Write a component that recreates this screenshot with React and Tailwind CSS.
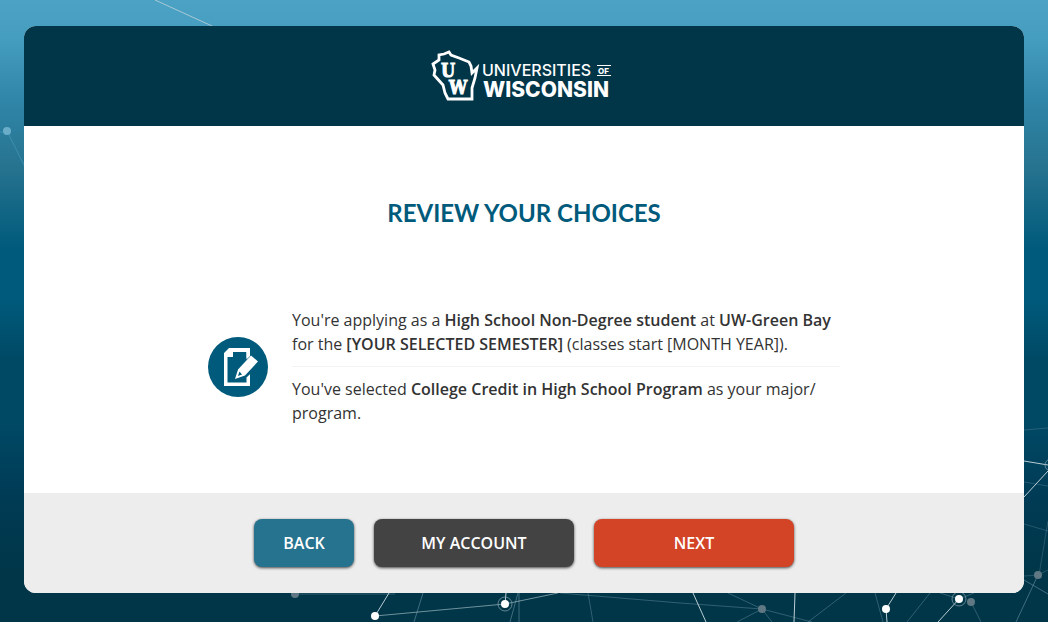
function Backdrop() {
  return (
    <svg
      className="absolute inset-0 h-full w-full"
      viewBox="0 0 1048 622"
      preserveAspectRatio="none"
      fill="none"
      aria-hidden="true"
    >
      <path d="M155 0 L212 26" stroke="#a9c8d6" />
      <g stroke="#6b93a3" strokeOpacity="0.6">
        <path d="M0 132h7M7 131l18 36" stroke="#4a9fc2" />
        <path d="M1024 430l24-2M1024 482l24 4M1024 524l24 7M1048 521l-9 54-15 1M1038 575l10-5" strokeOpacity="0.35" />
        <path d="M423 593l-9 29M518 593l-8 29M519 593v29M1024 580l24 14M1038 575l-22 47" />
        <path d="M295 594h100M560 593l120 10 82 6 50 13M728 593l34 16-25 13M762 609l10 13M846 593l-38 29M875 593l8 29M930 593l-23 29M971 602l10 20M940 593l19 6 15-6M588 593l5 29" strokeOpacity="0.45" />
      </g>
      <g stroke="#b9cdd4">
        <path d="M1024 461l24 4M1048 471l-24 26" />
        <path d="M389 593l-14 23M506 593l-1 11M693 593l13 29M795 593l-1 29M896 593l-10 16 1 13M959 599l-21 23" />
        <path d="M375 616l130-12 53-11" strokeOpacity="0.6" />
      </g>
      <g fill="#5f7883">
        <circle cx="7" cy="131" r="4" fill="#69adc8" />
        <circle cx="295" cy="594" r="4" />
        <circle cx="762" cy="609" r="4" />
        <circle cx="971" cy="602" r="4" />
        <circle cx="1038" cy="575" r="4" />
      </g>
      <g fill="#ffffff">
        <circle cx="375" cy="616" r="4" />
        <circle cx="505" cy="604" r="4" />
        <circle cx="886" cy="609" r="4" />
        <circle cx="959" cy="599" r="4" />
      </g>
      <g stroke="#8aa5b0" strokeOpacity="0.7">
        <circle cx="505" cy="604" r="7" />
        <circle cx="959" cy="599" r="7" />
        <circle cx="1051" cy="465" r="6" />
      </g>
    </svg>
  );
}

function Logo() {
  return (
    <svg width="186" height="52" viewBox="0 0 186 52" fill="#ffffff" role="img" aria-label="Universities of Wisconsin">
      <path
        d="M2 14 L8 10 L8 5 L13 4 L18 2 L20 5 L28 8 L38 12 L40 16 L41 23 L46 18 L44 28 L41 38 L41 49 L17 49 L14 43 L12 35 L3 25 L4 20 Z"
        fill="none"
        stroke="#ffffff"
        strokeWidth="2.8"
      />
      <g fontFamily="'DejaVu Serif Condensed', 'DejaVu Serif', serif" fontWeight="700" fontSize="18" stroke="#ffffff" strokeWidth="0.9">
        <text x="10" y="27">U</text>
        <text x="18" y="44">W</text>
      </g>
      <text x="51" y="26" fontFamily="Inter, sans-serif" fontWeight="500" fontSize="16">UNIVERSITIES</text>
      <text x="167" y="24" fontFamily="Inter, sans-serif" fontWeight="800" fontSize="8">OF</text>
      <path d="M166 15.5h14M166 25.5h14" stroke="#ffffff" />
      <text x="52" y="47" fontFamily="Inter, sans-serif" fontWeight="800" fontSize="21">WISCONSIN</text>
    </svg>
  );
}

function ReviewIcon() {
  return (
    <svg className="shrink-0" width="60" height="60" viewBox="0 0 60 60" aria-hidden="true">
      <circle cx="30" cy="30" r="30" fill="#005a7b" />
      <path
        fillRule="evenodd"
        fill="#ffffff"
        d="M21 11 H42 V49 H16 V16 Z M25 15 V20 H19.500 V45.500 H38.500 V15 Z"
      />
      <path d="M24 45 L28 31 L42 17 V13 L55 25 L39 40 Z" fill="#005a7b" />
      <path d="M38.500 11 H42 V19 L38.500 22.500 Z" fill="#ffffff" />
      <path
        fillRule="evenodd"
        fill="#ffffff"
        d="M27 42 L30 32.500 L43 18.500 L50 24.500 L37 38.500 Z M31.500 34.500 L30 39 L34 37.500 Z"
      />
    </svg>
  );
}

const buttonBase =
  "h-12 cursor-pointer rounded-lg text-base font-semibold text-white shadow-[0_1px_3px_rgba(0,0,0,0.7)]";

export default function App() {
  return (
    <div className="relative min-h-screen bg-[linear-gradient(to_bottom,#4ba2c5_0%,#459dbf_6%,#3188ab_15%,#26738f_27%,#005a7b_40%,#005a7b_48%,#004965_58%,#004965_68%,#003b55_80%,#003648_92%)] px-6 pt-[26px] pb-[29px] font-['Open_Sans',sans-serif]">
      <Backdrop />
      <main className="relative overflow-hidden rounded-xl bg-white">
        <header className="flex h-25 items-center justify-center bg-[#003648]">
          <Logo />
        </header>
        <section className="px-6 pt-[71px] pb-[68px]">
          <h1 className="text-center font-[Lato,sans-serif] text-2xl leading-8 font-bold text-[#005a7b]">
            REVIEW YOUR CHOICES
          </h1>
          <div className="mx-auto mt-[79px] flex max-w-[632px] items-center gap-6">
            <ReviewIcon />
            <div className="flex-1 text-base leading-6 text-[#333333]">
              <p className="border-b border-[#f3f3f3] pb-[10px]">
                You're applying as a <strong className="font-semibold">High School Non-Degree student</strong> at{" "}
                <strong className="font-semibold">UW-Green Bay</strong> for the{" "}
                <strong className="font-semibold">[YOUR SELECTED SEMESTER]</strong> (classes start [MONTH YEAR]).
              </p>
              <p className="pt-[10px]">
                You've selected <strong className="font-semibold">College Credit in High School Program</strong> as your
                major/<wbr />program.
              </p>
            </div>
          </div>
        </section>
        <footer className="flex min-h-25 flex-wrap items-center justify-center gap-5 bg-[#ededed] px-6 py-[26px]">
          <button type="button" className={`${buttonBase} w-25 bg-[#26738f]`}>BACK</button>
          <button type="button" className={`${buttonBase} w-50 bg-[#434343]`}>MY ACCOUNT</button>
          <button type="button" className={`${buttonBase} w-50 bg-[#d34427]`}>NEXT</button>
        </footer>
      </main>
    </div>
  );
}
